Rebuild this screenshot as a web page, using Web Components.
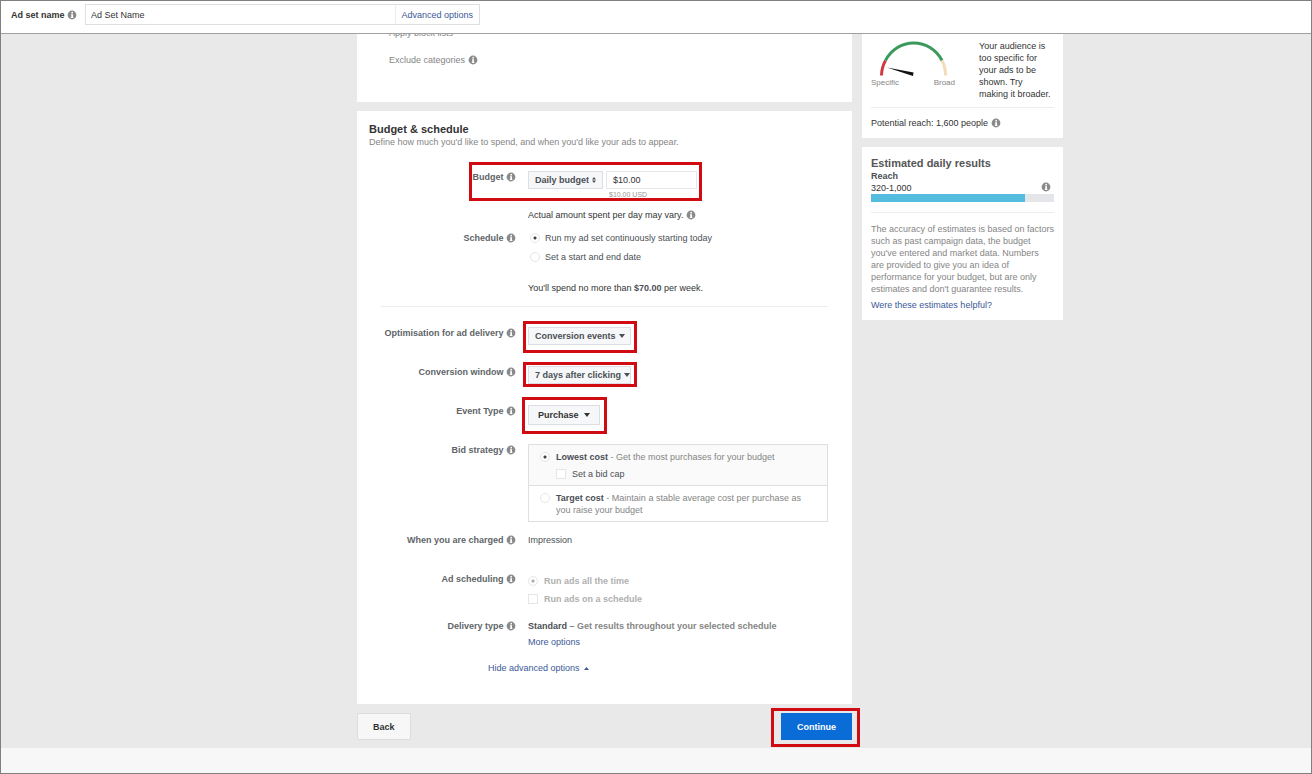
<!DOCTYPE html>
<html lang="en">
<head>
<meta charset="utf-8">
<title>Ad set</title>
<style>
  body {
    margin: 0;
    font: 9px/12px "Liberation Sans", Arial, sans-serif;
    color: #4b4f56;
    background: #e9e9e9;
  }
</style>
</head>
<body>
<ad-set-page>
  <ad-set-header slot="header"></ad-set-header>
  <placement-card></placement-card>
  <budget-card></budget-card>
  <step-buttons></step-buttons>
  <audience-card slot="side"></audience-card>
  <results-card slot="side"></results-card>
</ad-set-page>

<script>
// Styles used by every component that holds text or controls
const shared = `
  * { box-sizing: border-box; }
  h2, p { margin: 0; }
  a { color: #3b5998; text-decoration: none; }
  button, select, input { font: inherit; color: inherit; margin: 0; }
  hr { border: 0; border-top: 1px solid #ececee; margin: 0; }
  .muted { color: #858585; }
  .card { background: #fff; }
`;

function define(name, css, html) {
  customElements.define(name, class extends HTMLElement {
    constructor() {
      super();
      this.attachShadow({ mode: 'open' }).innerHTML = `<style>${shared}${css}</style>${html}`;
    }
  });
}

// Small round "i" badge
define('info-icon', `
  :host { display: inline-block; width: 10px; height: 10px; vertical-align: -2px; }
  svg { display: block; width: 100%; height: 100%; }
`, `
  <svg viewBox="0 0 10 10" aria-hidden="true">
    <circle cx="5" cy="5" r="4.4" fill="#8a8a8a"/>
    <circle cx="5.2" cy="2.7" r=".9" fill="#fff"/>
    <path d="M4 4.2h2v3h.5v.9H3.7v-.9h.6V5H4z" fill="#fff"/>
  </svg>
`);

// Red frame drawn round what is slotted in it
define('mark-box', `
  :host { display: inline-block; position: relative; vertical-align: top; }
  :host::after {
    content: "";
    position: absolute;
    inset: var(--mark-inset, -6px);
    border: 3px solid #d00c12;
    pointer-events: none;
  }
`, `<slot></slot>`);

// Label on the left, control on the right
define('form-row', `
  :host {
    display: grid;
    grid-template-columns: 147px minmax(0, 1fr);
    column-gap: 12px;
    align-items: start;
  }
  .label { text-align: right; white-space: nowrap; font-weight: bold; color: #606468; }
`, `
  <div class="label"><slot name="label"></slot></div>
  <div><slot></slot></div>
`);

define('ad-set-page', `
  :host {
    display: flex;
    flex-direction: column;
    min-height: 100vh;
    border: 1px solid #808080;
    box-sizing: border-box;
  }
  main {
    flex: 1;
    display: grid;
    grid-template-columns: minmax(0, 495px) 201px;
    gap: 10px;
    justify-content: center;
    align-items: start;
    padding: 0 0 8px 108px;
    overflow: hidden;
  }
  .column { display: flex; flex-direction: column; gap: 9px; }
  footer { height: 25px; background: #f7f7f7; }
`, `
  <slot name="header"></slot>
  <main>
    <div class="column"><slot></slot></div>
    <aside class="column"><slot name="side"></slot></aside>
  </main>
  <footer></footer>
`);

define('ad-set-header', `
  :host {
    display: flex;
    align-items: center;
    gap: 8px;
    padding: 3px 10px 8px;
    background: #fff;
    border-bottom: 1px solid #a0a0a0;
  }
  label { font-weight: bold; color: #333; white-space: nowrap; }
  .field { display: flex; align-items: center; width: 395px; height: 21px; border: 1px solid #dddfe2; }
  input { flex: 1; min-width: 0; height: 100%; padding: 0 5px; border: 0; border-right: 1px solid #ececee; outline: 0; background: none; color: #333; }
  a { padding: 0 6px 0 5px; white-space: nowrap; }
`, `
  <label for="name">Ad set name <info-icon></info-icon></label>
  <div class="field">
    <input id="name" type="text" value="Ad Set Name">
    <a href="#advanced">Advanced options</a>
  </div>
`);

define('placement-card', `
  :host { display: block; margin-top: -7px; }
  .card { height: 75px; padding-left: 32px; color: #858585; }
  p + p { margin-top: 15px; }
`, `
  <section class="card">
    <p>Apply block lists</p>
    <p>Exclude categories <info-icon></info-icon></p>
  </section>
`);

define('budget-card', `
  :host { display: block; }
  .card { padding: 11px 24px 30px 12px; }
  h2 { font-size: 11px; line-height: 14px; color: #333; }
  .budget { margin-top: 23px; }
  .amount { display: grid; grid-template-columns: 75px 91px; column-gap: 3px; }
  .amount small { grid-column: 2; font-size: 7px; padding-left: 3px; color: #999; }
  .note { margin-top: 8px; color: #333; }
  .schedule { margin-top: 11px; }
  .schedule p { margin-top: 19px; color: #333; }
  hr { margin: 12px 0 20px 12px; }
  .rows form-row { min-height: 39px; }
  .rows .scheduling { min-height: 47px; }
  .rows .delivery { min-height: 42px; }
  .delivery .muted { font-weight: bold; }
  b { color: #4b4f56; }

  .select { position: relative; display: inline-block; vertical-align: top; }
  .select svg { position: absolute; right: 7px; top: 50%; width: 6px; height: 4px; margin-top: -2px; pointer-events: none; }
  .select .updown { height: 6px; width: 4px; margin-top: -3px; }
  select {
    appearance: none;
    display: block;
    width: 100%;
    height: 18px;
    padding: 0 6px;
    border: 1px solid #dcdee3;
    border-radius: 0;
    background: #f6f7f9;
    font-weight: bold;
  }
  .wide { width: 103px; }
  .wide svg { right: 6px; }
  .event { width: 72px; }
  .event select { height: 20px; padding: 0 9px; color: #333; }
  .event svg { right: 10px; }
  .window svg { right: 1px; }
  .amount input { width: 100%; height: 18px; padding: 0 6px; border: 1px solid #e4e6e9; color: #333; }

  .choice { display: flex; align-items: flex-start; gap: 6px; }
  .choice + .choice { margin-top: 6px; }
  .schedule .choice { padding-left: 2px; gap: 5px; }
  .schedule .choice + .choice { margin-top: 7px; }
  input[type=radio], input[type=checkbox] {
    appearance: none;
    flex: none;
    width: 10px;
    height: 10px;
    margin-top: 1px;
    border: 1px solid #e4e6e8;
    background: #fff;
  }
  input[type=radio] { border-radius: 50%; }
  input[type=radio]:checked { background: radial-gradient(circle, #444 0 1px, #fff 2px); }
  input[type=radio]:disabled:checked { background: radial-gradient(circle, #aaa 0 1px, #fff 2px); }

  .bids { border: 1px solid #dddfe2; }
  .bid { padding: 6px 20px 5px 11px; }
  .bid:first-child { background: #fafafa; border-bottom: 1px solid #dddfe2; }
  .bid .cap { margin: 5px 0 0 16px; }
  .options { padding-top: 2px; }
  .disabled { color: #b0b0b0; font-weight: bold; }
  .hide { padding-left: 119px; }
  .hide svg { width: 5px; height: 3px; margin-left: 2px; vertical-align: 1px; }
`, `
  <section class="card">
    <h2>Budget &amp; schedule</h2>
    <p class="muted">Define how much you'd like to spend, and when you'd like your ads to appear.</p>

    <form-row class="budget">
      <label slot="label" for="budget-type">Budget <info-icon></info-icon></label>
      <mark-box style="--mark-inset: -9px -5px 0 -59px">
        <div class="amount">
          <div class="select">
            <select id="budget-type"><option>Daily budget</option></select>
            <svg class="updown" viewBox="0 0 4 6"><path d="M0 2.5 2 0l2 2.5zM0 3.5 2 6l2-2.5z" fill="#4b4f56"/></svg>
          </div>
          <input type="text" value="$10.00" aria-label="Budget amount">
          <small>$10.00 USD</small>
        </div>
      </mark-box>
      <p class="note">Actual amount spent per day may vary. <info-icon></info-icon></p>
    </form-row>

    <form-row class="schedule">
      <span slot="label">Schedule <info-icon></info-icon></span>
      <label class="choice"><input type="radio" name="schedule" checked>Run my ad set continuously starting today</label>
      <label class="choice"><input type="radio" name="schedule">Set a start and end date</label>
      <p>You'll spend no more than <b>$70.00</b> per week.</p>
    </form-row>

    <hr>

    <div class="rows">
      <form-row>
        <label slot="label" for="delivery">Optimisation for ad delivery <info-icon></info-icon></label>
        <mark-box style="--mark-inset: -6px -6px -8px -5px">
          <div class="select wide">
            <select id="delivery"><option>Conversion events</option></select>
            <svg viewBox="0 0 6 4"><path d="M0 0h6L3 4z" fill="#4b4f56"/></svg>
          </div>
        </mark-box>
      </form-row>
      <form-row>
        <label slot="label" for="window">Conversion window <info-icon></info-icon></label>
        <mark-box style="--mark-inset: -4px -6px -3px -5px">
          <div class="select wide window">
            <select id="window"><option>7 days after clicking</option></select>
            <svg viewBox="0 0 6 4"><path d="M0 0h6L3 4z" fill="#4b4f56"/></svg>
          </div>
        </mark-box>
      </form-row>
      <form-row>
        <label slot="label" for="event">Event Type <info-icon></info-icon></label>
        <mark-box style="--mark-inset: -8px -7px -9px -6px">
          <div class="select event">
            <select id="event"><option>Purchase</option></select>
            <svg viewBox="0 0 6 4"><path d="M0 0h6L3 4z" fill="#333"/></svg>
          </div>
        </mark-box>
      </form-row>
      <form-row style="padding-bottom: 12px">
        <span slot="label">Bid strategy <info-icon></info-icon></span>
        <div class="bids">
          <div class="bid">
            <label class="choice"><input type="radio" name="bid" checked><span><b>Lowest cost</b> <span class="muted">- Get the most purchases for your budget</span></span></label>
            <label class="choice cap"><input type="checkbox">Set a bid cap</label>
          </div>
          <div class="bid">
            <label class="choice"><input type="radio" name="bid"><span><b>Target cost</b> <span class="muted">- Maintain a stable average cost per purchase as<br>you raise your budget</span></span></label>
          </div>
        </div>
      </form-row>
      <form-row>
        <span slot="label">When you are charged <info-icon></info-icon></span>
        Impression
      </form-row>
      <form-row class="scheduling">
        <span slot="label">Ad scheduling <info-icon></info-icon></span>
        <div class="options">
          <label class="choice disabled"><input type="radio" name="ads" checked disabled>Run ads all the time</label>
          <label class="choice disabled"><input type="checkbox" disabled>Run ads on a schedule</label>
        </div>
      </form-row>
      <form-row class="delivery">
        <span slot="label">Delivery type <info-icon></info-icon></span>
        <p><b>Standard</b> <span class="muted">– Get results throughout your selected schedule</span></p>
        <p style="margin-top: 4px"><a href="#more">More options</a></p>
      </form-row>
    </div>
    <p class="hide"><a href="#hide">Hide advanced options <svg viewBox="0 0 5 3"><path d="M0 3h5L2.5 0z" fill="#3b5998"/></svg></a></p>
  </section>
`);

define('step-buttons', `
  :host { display: flex; justify-content: space-between; }
  button { height: 27px; padding: 0 15px; border: 1px solid #dcdcdc; border-radius: 2px; background: #f7f7f7; color: #333; font-weight: bold; }
  .primary { border-color: #0a6cd6; border-radius: 0; background: #0a6cd6; color: #fff; }
`, `
  <button type="button">Back</button>
  <mark-box style="--mark-inset: -5px -8px -7px -10px">
    <button class="primary" type="button">Continue</button>
  </mark-box>
`);

define('audience-card', `
  :host { display: block; }
  .card { padding: 6px 9px 9px; color: #333; }
  .meter { display: grid; grid-template-columns: 84px 1fr; column-gap: 24px; padding-bottom: 7px; }
  svg { display: block; width: 84px; height: 37px; }
  .ends { display: flex; justify-content: space-between; font-size: 8px; color: #858585; }
  hr { margin-bottom: 9px; }
`, `
  <section class="card">
    <div class="meter">
      <div>
        <svg viewBox="0 0 84 37" fill="none" stroke-width="3" aria-hidden="true">
          <path d="M10.5 35.500A31.500 31.500 0 0 1 14.500 20.500" stroke="#d0393e"/>
          <path d="M14.500 20.500A31.500 31.500 0 0 1 71 20.500" stroke="#3a9a5c"/>
          <path d="M71 20.500A31.500 31.500 0 0 1 74.500 35.500" stroke="#f3dcb8"/>
          <path d="M16 27.500 42.500 32.500 42 36z" fill="#111"/>
        </svg>
        <div class="ends"><span>Specific</span><span>Broad</span></div>
      </div>
      <p>Your audience is too specific for your ads to be shown. Try making it broader.</p>
    </div>
    <hr>
    <p>Potential reach: 1,600 people <info-icon></info-icon></p>
  </section>
`);

define('results-card', `
  :host { display: block; }
  .card { padding: 9px; }
  h2 { font-size: 11px; line-height: 14px; color: #555; }
  .reach { display: flex; justify-content: space-between; color: #333; }
  .bar { height: 8px; background: #e4e6ea; }
  .fill { width: 84%; height: 100%; background: #54bddf; }
  hr { margin: 10px 0; }
  p { margin: 0 -3px 4px 0; }
`, `
  <section class="card">
    <h2>Estimated daily results</h2>
    <b>Reach</b>
    <div class="reach"><span>320-1,000</span><info-icon style="margin-right: 3px"></info-icon></div>
    <div class="bar" role="meter" aria-label="Reach" aria-valuenow="84"><div class="fill"></div></div>
    <hr>
    <p class="muted">The accuracy of estimates is based on factors such as past campaign data, the budget you've entered and market data. Numbers<br>are provided to give you an idea of performance for your budget, but are only estimates and don't guarantee results.</p>
    <a href="#feedback">Were these estimates helpful?</a>
  </section>
`);
</script>
</body>
</html>
